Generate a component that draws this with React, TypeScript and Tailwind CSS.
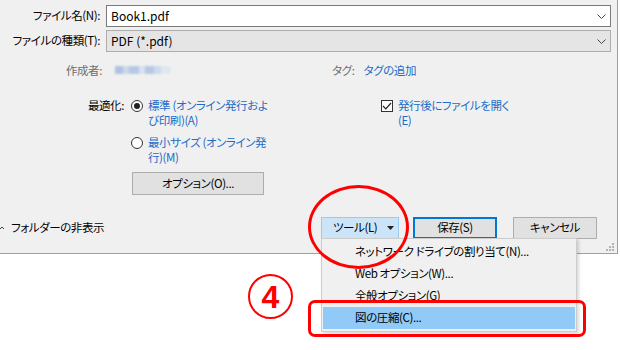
import React from 'react';

const FONT = "font-['Noto_Sans_CJK_JP','Noto_Sans',sans-serif] [font-feature-settings:'palt'] tracking-[-0.4px]";

const Chevron = () => (
    <svg width="9" height="5" viewBox="0 0 9 5" className="mr-[4px]">
        <polyline points="0.5,0.5 4.5,4.5 8.5,0.5" fill="none" stroke="#444" strokeWidth="1" />
    </svg>
);

const FieldRow = ({ label, value, select }: { label: string; value: string; select?: boolean }) => (
    <div className="flex h-[22px] items-center">
        <div className="w-[102px] pr-[2px] text-right text-[11.5px] whitespace-nowrap text-black">{label}</div>
        <div
            className={`ml-[4px] flex h-[22px] w-[505px] items-center justify-between border pl-[4px] ${
                select ? 'border-[#adadad] bg-[#e5e5e5]' : 'border-[#7a7a7a] bg-white'
            }`}
        >
            <span className="text-[12px] tracking-normal text-black">{value}</span>
            <Chevron />
        </div>
    </div>
);

const Radio = ({ checked }: { checked?: boolean }) => (
    <span className="mt-[2px] flex h-[12px] w-[12px] shrink-0 items-center justify-center rounded-full border border-[#333] bg-white">
        {checked && <span className="h-[6px] w-[6px] rounded-full bg-[#222]" />}
    </span>
);

const MenuItem = ({ label, active }: { label: string; active?: boolean }) => (
    <div className={`mx-[1px] flex h-[22px] items-center pl-[32px] text-[11.5px] whitespace-nowrap text-black ${active ? 'bg-[#91c9f7]' : ''}`}>
        {label}
    </div>
);

export default function App() {
    return (
        <div className={`relative h-[350px] w-[620px] overflow-hidden bg-white ${FONT}`}>
            {/* dialog */}
            <div className="relative h-[254px] w-[618px] border-r border-b border-[#a0a0a0] bg-[#f0f0f0] pt-[5px]">
                <FieldRow label="ファイル名(N):" value="Book1.pdf" />
                <div className="mt-[3px]">
                    <FieldRow label="ファイルの種類(T):" value="PDF (*.pdf)" select />
                </div>

                <div className="mt-[10px] flex h-[16px] items-center text-[11.5px] leading-[16px]">
                    <div className="w-[103px] pr-[1px] text-right text-[#6d6d6d]">作成者:</div>
                    <div className="ml-[12px] flex h-[8px] w-[56px] opacity-80 blur-[1px]">
                        <span className="w-[8px] bg-[#9fb8dc]" />
                        <span className="w-[6px] bg-[#c3d3ea]" />
                        <span className="w-[10px] bg-[#a7c0e2]" />
                        <span className="w-[6px] bg-[#d2deef]" />
                        <span className="w-[9px] bg-[#a9bfe0]" />
                        <span className="w-[7px] bg-[#c7d6ec]" />
                        <span className="w-[10px] bg-[#dde6f2]" />
                    </div>
                    <div className="ml-[161px] text-[#6d6d6d]">タグ:</div>
                    <div className="ml-[9px] text-[#1c6cc8]">タグの追加</div>
                </div>

                <div className="mt-[20px] grid grid-cols-[125px_256px_1fr] text-[11.5px] leading-[15px]">
                    <div className="pr-[1px] text-right text-black">最適化:</div>
                    <div className="pl-[6px]">
                        <div className="flex gap-[5px]">
                            <Radio checked />
                            <div className="whitespace-nowrap text-[#1c6cc8]">
                                標準 (オンライン発行およ
                                <br />
                                び印刷)(A)
                            </div>
                        </div>
                        <div className="mt-[7px] flex gap-[5px]">
                            <Radio />
                            <div className="whitespace-nowrap text-[#1c6cc8]">
                                最小サイズ (オンライン発
                                <br />
                                行)(M)
                            </div>
                        </div>
                        <button className="mt-[7px] ml-[1px] flex h-[23px] w-[132px] items-center justify-center border border-[#adadad] bg-[#e1e1e1] text-[11.5px] whitespace-nowrap text-black">
                            オプション(O)...
                        </button>
                    </div>
                    <div className="flex gap-[5px]">
                        <span className="mt-[2px] flex h-[12px] w-[12px] shrink-0 items-center justify-center border border-[#333] bg-white">
                            <svg width="10" height="8" viewBox="0 0 10 8">
                                <polyline points="1,4 3.8,6.8 9,1" fill="none" stroke="#222" strokeWidth="1.2" />
                            </svg>
                        </span>
                        <div className="whitespace-nowrap text-[#1c6cc8]">
                            発行後にファイルを開く
                            <br />
                            (E)
                        </div>
                    </div>
                </div>

                <div className="mt-[22px] flex h-[22px] items-center pr-[20px] text-[11.5px]">
                    <div className="flex items-center">
                        <svg width="5" height="5" viewBox="0 0 5 5" className="-ml-[1px]">
                            <polyline points="0,4 3,1 6,4" fill="none" stroke="#444" strokeWidth="1" />
                        </svg>
                        <span className="ml-[7px] whitespace-nowrap text-black">フォルダーの非表示</span>
                    </div>
                    <div className="ml-auto flex items-center">
                        <button className="flex h-[22px] w-[78px] items-center border border-[#99c9ef] bg-[#cce4f7] pl-[11px] text-[11.5px] whitespace-nowrap text-black">
                            ツール(L)
                            <svg width="7" height="4" viewBox="0 0 7 4" className="ml-auto mr-[4px]">
                                <polygon points="0,0 7,0 3.5,4" fill="#222" />
                            </svg>
                        </button>
                        <button className="ml-[14px] flex h-[22px] w-[84px] items-center justify-center border-2 border-[#0078d7] bg-[#e1e1e1] text-[11.5px] whitespace-nowrap text-black">
                            保存(S)
                        </button>
                        <button className="ml-[16px] flex h-[22px] w-[84px] items-center justify-center border border-[#adadad] bg-[#e1e1e1] text-[11.5px] whitespace-nowrap text-black">
                            キャンセル
                        </button>
                    </div>
                </div>

                {/* resize grip */}
                <svg width="9" height="9" viewBox="0 0 9 9" className="absolute right-[2px] bottom-[1px]">
                    <rect x="6" y="0" width="2" height="2" fill="#b4b4b4" />
                    <rect x="3" y="3" width="2" height="2" fill="#b4b4b4" />
                    <rect x="6" y="3" width="2" height="2" fill="#b4b4b4" />
                    <rect x="0" y="6" width="2" height="2" fill="#b4b4b4" />
                    <rect x="3" y="6" width="2" height="2" fill="#b4b4b4" />
                    <rect x="6" y="6" width="2" height="2" fill="#b4b4b4" />
                </svg>
            </div>

            {/* tools dropdown menu */}
            <div className="absolute top-[238px] left-[321px] w-[256px] border border-[#cccccc] bg-[#f0f0f0] py-[2px] shadow-[2px_2px_3px_rgba(0,0,0,0.15)]">
                <MenuItem label="ネットワーク ドライブの割り当て(N)..." />
                <MenuItem label="Web オプション(W)..." />
                <MenuItem label="全般オプション(G)" />
                <MenuItem label="図の圧縮(C)..." active />
            </div>

            {/* annotations */}
            <div className="pointer-events-none absolute top-[185px] left-[308px] h-[84px] w-[101px] rounded-[50%] border-[3px] border-[#ff0000]" />
            <div className="pointer-events-none absolute top-[300px] left-[308px] h-[37px] w-[278px] rounded-[7px] border-[3px] border-[#ff0000]" />
            <div className="absolute top-[274px] left-[248px] flex h-[45px] w-[45px] items-center justify-center rounded-full border-2 border-[#ff0000] font-['Liberation_Sans',sans-serif] text-[32px] font-bold leading-none tracking-normal text-[#ff0000]">
                4
            </div>
        </div>
    );
}
